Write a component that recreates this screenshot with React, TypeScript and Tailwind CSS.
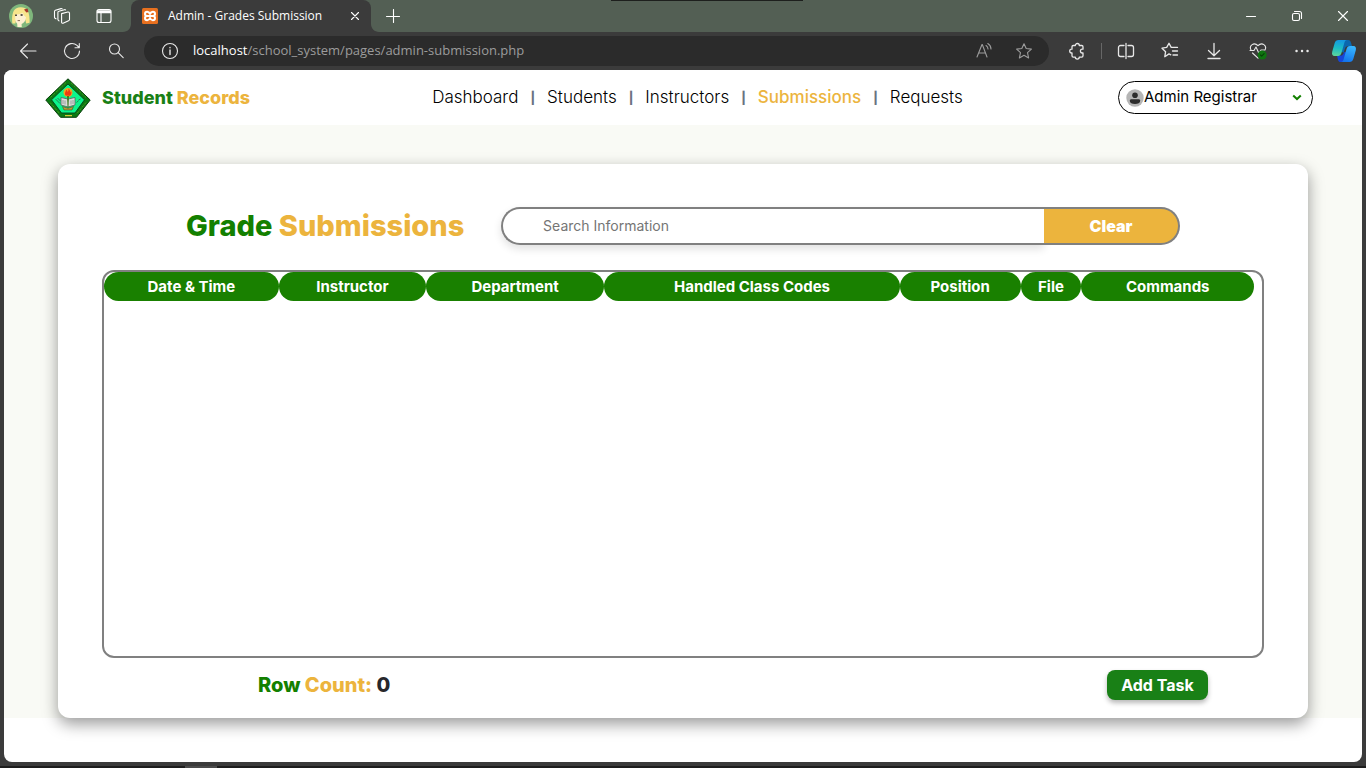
import type { ReactNode } from "react";

const navItems = ["Dashboard", "Students", "Instructors", "Submissions", "Requests"];

const columns = [
  { label: "Date & Time", width: "w-[15.2%]" },
  { label: "Instructor", width: "w-[12.8%]" },
  { label: "Department", width: "w-[15.5%]" },
  { label: "Handled Class Codes", width: "w-[25.7%]" },
  { label: "Position", width: "w-[10.5%]" },
  { label: "File", width: "w-[5.3%]" },
  { label: "Commands", width: "w-[15%]" },
];

function Icon({ children, size = 18, className = "" }: { children: ReactNode; size?: number; className?: string }) {
  return (
    <svg
      width={size}
      height={size}
      viewBox={`0 0 ${size} ${size}`}
      fill="none"
      stroke="currentColor"
      strokeWidth="1.1"
      strokeLinecap="round"
      strokeLinejoin="round"
      aria-hidden="true"
      className={className}
    >
      {children}
    </svg>
  );
}

function ChromeButton({ label, className = "w-11", children }: { label: string; className?: string; children: ReactNode }) {
  return (
    <button type="button" aria-label={label} className={`flex h-8 shrink-0 items-center justify-center ${className}`}>
      {children}
    </button>
  );
}

function ProfileAvatar() {
  return (
    <svg width="24" height="24" viewBox="0 0 24 24" aria-hidden="true">
      <circle cx="12" cy="12" r="12" fill="#7fb77c" />
      <path d="M3.4 19.5C2.6 13 3.4 6.5 7 4.400c4-2.200 9.600-1.400 11.600 2.200 1.800 3.400 2.200 8.600 2 12.200l-3.400.8-1.200-5-8.600-.6-1 5.600z" fill="#f7e58c" />
      <path d="M6.400 10.400c2.600.4 5.600-.6 7.200-1.600.8 2.400 2.200 3.600 3.400 4.200-.2 3.600-2 6-4.400 7l.2 3H8.400l-.2-3.200c-1.800-1.600-2.600-5.400-1.800-9.400z" fill="#fdf0d0" />
      <path d="M6.200 11.200h1.600M11.600 11h2" stroke="#2b2520" strokeWidth="1.600" />
      <path d="M8.600 16.600h2.400" stroke="#6b4a3a" strokeWidth=".8" />
      <path d="M15 5.400l3.600-.8.8 3.400-2 .6z" fill="#a83a2c" />
    </svg>
  );
}

function CopilotLogo() {
  return (
    <svg width="26" height="24" viewBox="0 0 26 24" aria-hidden="true">
      <defs>
        <linearGradient id="cpLeft" x1="0.3" y1="0" x2="0.2" y2="1">
          <stop offset="0" stopColor="#1598e0" />
          <stop offset=".5" stopColor="#1cbcc4" />
          <stop offset="1" stopColor="#5fd69a" />
        </linearGradient>
        <linearGradient id="cpRight" x1="0.6" y1="0" x2="0.3" y2="1">
          <stop offset="0" stopColor="#38b6ff" />
          <stop offset="1" stopColor="#1272ea" />
        </linearGradient>
      </defs>
      <path d="M8 1h9c2 0 2.600 1.200 3 2.800L21 7h-3.500c-2 0-3 .8-3.600 2.800L12.500 14 10 12z" fill="#0b67ae" />
      <path d="M6 16.500h5l3-4 2 2-1 8.500h-5c-2 0-2.700-1-3.100-2.600z" fill="#1646d8" />
      <path d="M7.500 1H16c-1.500 0-2.200 1.200-2.700 3l-2.700 9.600c-.6 2.200-1.600 3.400-3.600 3.400H3.600C1.300 17 .6 15 1.200 12.700L3.700 4c.6-2 1.800-3 3.800-3z" fill="url(#cpLeft)" />
      <path d="M18.500 23H10c1.500 0 2.200-1.200 2.700-3l2.700-9.600c.6-2.200 1.600-3.400 3.600-3.400h3.400c2.300 0 3 2 2.400 4.300L22.300 20c-.6 2-1.800 3-3.800 3z" fill="url(#cpRight)" />
    </svg>
  );
}

function SchoolLogo() {
  return (
    <svg width="46" height="40" viewBox="0 0 46 40" aria-hidden="true">
      <path d="M23 .8 45.200 22 31.500 39.300H15.500L.8 22z" fill="#0a7a12" stroke="#073d0b" strokeWidth="1" />
      <path d="M21 4.500 5 20M26 4.800 41 19.500M5 24.500l10 11.500M41 24.500 31.500 36" stroke="#4c9420" strokeWidth="1" strokeDasharray="2.500 1.300" fill="none" />
      <path d="M20 37.700h7" stroke="#d6c937" strokeWidth="1.300" />
      <path d="M23 6 39.500 21.800 30 35H16.500L6.500 21.800z" fill="#0bf58b" stroke="#063e1b" strokeWidth=".9" />
      <path d="m10.500 21 4.500 4.500M12.500 20l3 3M31.500 24.500l2-1.800M33.500 22l2-1" stroke="#267f55" strokeWidth="1" />
      <circle cx="23" cy="14.500" r="4.500" fill="#f2a51c" />
      <path d="M20.500 17.500c-1.500-3 .8-3.800.5-6 1.200.8 1.600 1.800 1.700 2.800.8-1.400 1-2.600.6-3.800 2 1.500 2 2.900 1.900 4l1-1.300c.6 2.400-.2 3.600-1.200 4.600z" fill="#ef3a13" />
      <path d="m16 19.500 5.500 1.200L23 21.500l1.500-.8 5.500-1.200v7.500L23 29l-7-2z" fill="#d9dcda" stroke="#555e5b" strokeWidth=".8" />
      <path d="M18 22v4M20 22.500v4M26 22.500v4M28 22v4" stroke="#898f8e" strokeWidth=".8" />
      <path d="M22 18h2L23.400 30h-.8z" fill="#3f7a20" />
      <path d="m17.500 28.500 5.500 1.700 5.500-1.700-1.500 3.500h-8z" fill="#bd9b36" stroke="#36522b" strokeWidth=".6" />
    </svg>
  );
}

function TitleBar() {
  return (
    <div className="relative flex h-8 items-center bg-[#535f54] text-white">
      <div className="absolute left-[44.7%] top-0 h-px w-[14.1%] bg-[#1d1f1d]" />
      <ChromeButton label="Profile" className="w-[42px]">
        <ProfileAvatar />
      </ChromeButton>
      <ChromeButton label="Workspaces" className="w-10">
        <Icon>
          <path d="M8.600 6.600 14.800 5c.8-.2 1.700.3 1.700 1.200v6.300c0 .6-.4 1-1 1.200l-5.400 2.500c-.8.300-1.500-.2-1.500-1z" />
          <path d="M6 13.800l-.7-.6c-.3-.2-.4-.5-.4-.9V5.500c0-.6.400-1.100 1-1.200l5.600-1.600c.4-.1.8 0 1.100.2" />
          <path d="M3 11.800l-.9-.6c-.4-.2-.6-.6-.6-1V4.400c0-.5.400-1 .9-1.200L8 1.600c.5-.1.900 0 1.200.3" />
        </Icon>
      </ChromeButton>
      <ChromeButton label="Tab actions" className="w-11">
        <Icon>
          <rect x="2" y="2.500" width="14" height="13" rx="2" />
          <path d="M2.500 4h13M2.500 5.500h13" strokeWidth="1.500" />
          <path d="M6 6v9.500" />
        </Icon>
      </ChromeButton>
      <div className="relative ml-[5px] flex h-8 w-60 items-center rounded-t-lg bg-[#3b3b3b] pl-[11px]">
        <svg className="absolute -left-2 bottom-0" width="8" height="8" aria-hidden="true">
          <path d="M8 0v8H0c4.400 0 8-3.600 8-8z" fill="#3b3b3b" />
        </svg>
        <svg className="absolute -right-2 bottom-0" width="8" height="8" aria-hidden="true">
          <path d="M0 0v8h8c-4.400 0-8-3.600-8-8z" fill="#3b3b3b" />
        </svg>
        <svg width="16" height="16" viewBox="0 0 16 16" aria-hidden="true">
          <rect width="16" height="16" rx="1.500" fill="#e8701f" />
          <path d="M6.600 8H5.200C3.800 8 3 7.200 3 5.900S3.900 3.700 5.200 3.700c1.500 0 2.300 1 2.800 2.300.5-1.300 1.300-2.300 2.800-2.300 1.300 0 2.200.9 2.200 2.200S12.200 8 10.800 8H9.400M6.600 8H5.200C3.800 8 3 8.800 3 10.100s.9 2.200 2.200 2.200c1.500 0 2.300-1 2.800-2.300.5 1.300 1.300 2.300 2.800 2.300 1.300 0 2.200-.9 2.200-2.200S12.200 8 10.800 8H6.600" fill="none" stroke="#fff" strokeWidth="2" strokeLinejoin="round" />
        </svg>
        <span className="ml-2.5 flex-1 whitespace-nowrap font-['Open_Sans',sans-serif] text-xs">Admin - Grades Submission</span>
        <ChromeButton label="Close tab" className="w-8">
          <Icon size={10}>
            <path d="M1.500 1.500l7 7M8.500 1.500l-7 7" />
          </Icon>
        </ChromeButton>
      </div>
      <ChromeButton label="New tab">
        <Icon size={14}>
          <path d="M.5 7.500h13M7.500.5v13" />
        </Icon>
      </ChromeButton>
      <div className="ml-auto flex">
        <ChromeButton label="Minimize" className="w-[46px]">
          <Icon size={12}>
            <path d="M1.500 6.500h9" />
          </Icon>
        </ChromeButton>
        <ChromeButton label="Restore" className="w-[46px]">
          <Icon size={12}>
            <rect x="1.500" y="3.500" width="7" height="7" rx="1.500" />
            <path d="M3.500 1.500h5a2 2 0 0 1 2 2v5" />
          </Icon>
        </ChromeButton>
        <ChromeButton label="Close window" className="w-[46px]">
          <Icon size={12}>
            <path d="M1.500 1.500l9 9M10.500 1.500l-9 9" />
          </Icon>
        </ChromeButton>
      </div>
    </div>
  );
}

function Toolbar() {
  return (
    <div className="flex h-[38px] items-center bg-[#3b3b3b] pl-1.5 pr-0.5 text-[#e8e8e8]">
      <ChromeButton label="Back">
        <Icon>
          <path d="M17 9H1.500M8.500 2 1.500 9l7 7" />
        </Icon>
      </ChromeButton>
      <ChromeButton label="Refresh">
        <Icon>
          <path d="M16.500 9A7.500 7.500 0 1 1 14 3.400L16 5.500M16.300 1.500v4.300H12" />
        </Icon>
      </ChromeButton>
      <ChromeButton label="Search">
        <Icon>
          <circle cx="7.500" cy="7" r="5" />
          <path d="m11.200 10.700 5 5" />
        </Icon>
      </ChromeButton>
      <div className="mx-1.5 flex h-[30px] min-w-0 flex-1 items-center rounded-full bg-[#2b2b2b] pl-[17px] pr-[5px]">
        <Icon className="shrink-0">
          <circle cx="9" cy="9" r="7.500" />
          <path d="M9 8v4.500M9 5.500v.3" strokeWidth="1.400" />
        </Icon>
        <a
          href="#address"
          className="ml-3.5 flex-1 truncate font-['Open_Sans',sans-serif] text-[13px] text-[#9c9c9c]"
        >
          <span className="text-white">localhost</span>/school_system/pages/admin-submission.php
        </a>
        <ChromeButton label="Read aloud" className="w-10 text-[#9c9c9c]">
          <Icon>
            <path d="m2 15 5-12.500h.3L12 15M3.800 11h6.600M11 3.500c1.300.8 2 2 2 3.500M12.800 1.500c2 1.200 3.200 3 3.200 5.500" />
          </Icon>
        </ChromeButton>
        <ChromeButton label="Add to favorites" className="w-10 text-[#9c9c9c]">
          <Icon>
            <path d="m9 1.700 2.200 4.800 5.200.6-3.900 3.600 1.100 5.200L9 13.300l-4.600 2.600 1.100-5.200L1.600 7.100l5.200-.6z" />
          </Icon>
        </ChromeButton>
      </div>
      <ChromeButton label="Extensions">
        <Icon>
          <path d="M5.300 3.500h2a2 2 0 0 1 4 0h2.400c.8 0 1.300.5 1.300 1.300v2.400h-.7a1.900 1.900 0 0 0 0 3.800h.7v2.800c0 .8-.5 1.300-1.300 1.300h-2.400a2 2 0 0 1-4 0h-2c-.8 0-1.300-.5-1.300-1.300V11h-.4a1.900 1.900 0 0 1 0-3.800H4V4.800c0-.8.500-1.300 1.300-1.300z" strokeWidth="1.300" />
        </Icon>
      </ChromeButton>
      <div className="mx-0.5 h-4 w-px bg-[#676767]" />
      <ChromeButton label="Split screen">
        <Icon>
          <path d="M7 3.500H3.500a2 2 0 0 0-2 2v7a2 2 0 0 0 2 2H7M11 3.500h3.500a2 2 0 0 1 2 2v7a2 2 0 0 1-2 2H11M9 1.500v15" strokeWidth="1.300" />
        </Icon>
      </ChromeButton>
      <ChromeButton label="Favorites">
        <Icon>
          <path d="m9.800 12.800-1.800-.9-4.200 2.800.8-5L1 6.200l4.700-.8L8 1.200l2.200 4.200h6.300M11.500 9h5M12 13h4.500" strokeWidth="1.300" />
        </Icon>
      </ChromeButton>
      <ChromeButton label="Downloads">
        <Icon>
          <path d="M9 1.500v12M3.500 8.500l5.500 5.200 5.500-5.200M3 16.500h12" strokeWidth="1.300" />
        </Icon>
      </ChromeButton>
      <ChromeButton label="Browser essentials">
        <Icon>
          <path d="M2 8C-.3 3.500 5-.5 9 3.700c4-4.200 9.300-.2 7 4.300M1 8.500h4L7 5l3 6.500L12 8h4M3.500 11 9 16.200" />
          <circle cx="13.200" cy="13" r="4.500" fill="#0f7410" stroke="none" />
          <path d="m11.500 13 1.200 1.200 2.400-2.500" stroke="#073f08" />
        </Icon>
      </ChromeButton>
      <ChromeButton label="Settings and more">
        <Icon>
          <path d="M3.500 9h.1M9 9h.1M14.500 9h.1" strokeWidth="2.400" />
        </Icon>
      </ChromeButton>
      <ChromeButton label="Copilot" className="w-10">
        <CopilotLogo />
      </ChromeButton>
    </div>
  );
}

function SiteHeader() {
  return (
    <header className="flex h-[55px] shrink-0 items-center bg-white pl-[41px] pr-[49px]">
      <a href="#home" className="flex w-[232px] shrink-0 items-center gap-[11px] whitespace-nowrap text-lg font-extrabold">
        <SchoolLogo />
        <span className="text-[#198016]">
          Student <span className="text-[#ecb43d]">Records</span>
        </span>
      </a>
      <nav aria-label="Main" className="flex flex-1 justify-center">
        <ul className="flex items-center gap-3 whitespace-nowrap text-[17px]">
          {navItems.map((item, i) => (
            <li key={item} className="flex items-center gap-3">
              {i > 0 && <span className="text-xs font-extrabold text-gray-500">|</span>}
              <a
                href={`#${item.toLowerCase()}`}
                aria-current={item === "Submissions" ? "page" : undefined}
                className={item === "Submissions" ? "font-medium text-[#ecb43d]" : "font-light text-black"}
              >
                {item}
              </a>
            </li>
          ))}
        </ul>
      </nav>
      <div className="flex h-[33px] w-[195px] shrink-0 items-center rounded-full border border-black pl-[7px] pr-2.5">
        <svg width="18" height="18" viewBox="0 0 18 18" aria-hidden="true" className="shrink-0">
          <circle cx="9" cy="9" r="8.700" fill="#b5b5b5" />
          <circle cx="9" cy="6.300" r="2.800" fill="#2d2d2d" />
          <path d="M3.800 11.800c0-1 .7-1.500 1.600-1.500h7.200c.9 0 1.600.5 1.600 1.500 0 2.100-2.300 3.300-5.200 3.300s-5.200-1.200-5.200-3.300z" fill="#2d2d2d" />
        </svg>
        <select aria-label="Account" className="min-w-0 flex-1 appearance-none bg-transparent text-[15px] text-black">
          <option>Admin Registrar</option>
        </select>
        <svg width="10" height="7" viewBox="0 0 10 7" fill="none" stroke="#138000" strokeWidth="2" aria-hidden="true" className="shrink-0">
          <path d="m1.200 1.400 3.800 3.600 3.800-3.600" />
        </svg>
      </div>
    </header>
  );
}

function SubmissionsCard() {
  return (
    <section className="flex flex-1 flex-col rounded-xl bg-white px-11 pb-[18px] pt-[43px] shadow-[0_6px_16px_rgba(0,0,0,0.4)]">
      <div className="flex h-[38px] items-center justify-between px-[84px]">
        <h1 className="whitespace-nowrap text-[29px] font-extrabold text-[#138000]">
          Grade <span className="text-[#ecb43d]">Submissions</span>
        </h1>
        <form role="search" className="flex h-full w-[68.3%]" onSubmit={(e) => e.preventDefault()}>
          <input
            type="text"
            aria-label="Search Information"
            placeholder="Search Information"
            className="min-w-0 flex-1 rounded-l-full border-2 border-r-0 border-[#808080] bg-white pl-10 text-sm placeholder:text-[#757575] shadow-[0_4px_8px_rgba(0,0,0,0.12)]"
          />
          <button
            type="reset"
            className="w-[136px] rounded-r-full border-2 border-l-0 border-[#808080] bg-[#ecb43d] text-base font-black text-white"
          >
            Clear
          </button>
        </form>
      </div>
      <div className="mt-[25px] flex-1 rounded-xl border-2 border-[#808080] pr-2">
        <table className="w-full table-fixed border-separate border-spacing-0">
          <thead>
            <tr>
              {columns.map((c) => (
                <th key={c.label} scope="col" className={`h-[29px] whitespace-nowrap rounded-full bg-[#198000] p-0 text-[15px] leading-5 font-bold text-white ${c.width}`}>
                  {c.label}
                </th>
              ))}
            </tr>
          </thead>
          <tbody />
        </table>
      </div>
      <div className="mt-3 flex items-center justify-between pl-[156px] pr-14">
        <p className="text-xl font-extrabold leading-[30px] text-[#138000]">
          Row <span className="text-[#ecb43d]">Count:</span> <span className="text-[#27272b]">0</span>
        </p>
        <button
          type="button"
          className="h-[30px] w-[101px] whitespace-nowrap rounded-lg bg-[#198016] text-base font-bold text-white shadow-[0_3px_5px_rgba(0,0,0,0.28)]"
        >
          Add Task
        </button>
      </div>
    </section>
  );
}

export default function App() {
  return (
    <div className="flex min-h-screen flex-col bg-[#3b3b3b]">
      <TitleBar />
      <Toolbar />
      <div className="mx-1 flex flex-1 flex-col overflow-hidden rounded-lg bg-white font-[Inter,sans-serif]">
        <SiteHeader />
        <main className="mb-11 flex flex-1 flex-col bg-[#f9faf5] px-[54px] pt-[39px]">
          <SubmissionsCard />
        </main>
      </div>
      <div className="mt-1 h-0.5 bg-[#1d1d1d] pl-[185px]">
        <div className="h-full w-8 bg-[#4b4b4b]" />
      </div>
    </div>
  );
}
